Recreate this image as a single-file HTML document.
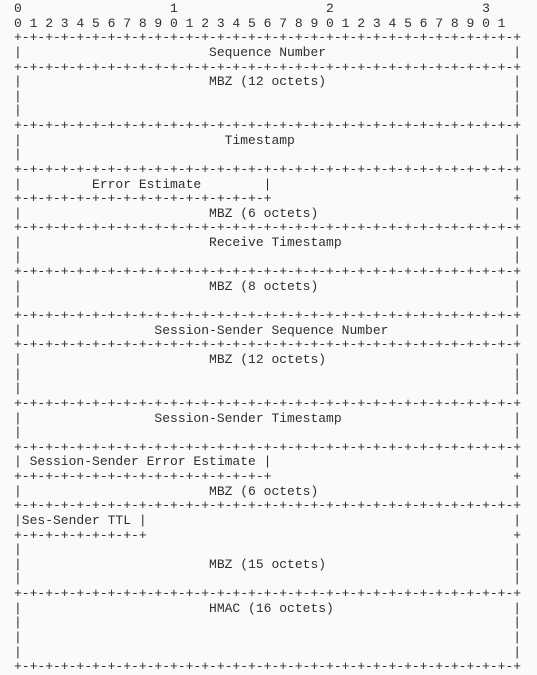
<!DOCTYPE html>
<html><head><meta charset="utf-8"><style>
html,body{margin:0;padding:0;background:#fafafa;width:537px;height:672px;overflow:hidden}
pre{margin:0;position:absolute;left:14px;top:2px;font-family:"Liberation Mono",monospace;font-size:13.0px;line-height:14.63px;color:#2e2e2e}
</style></head><body><pre>0                   1                   2                   3
0 1 2 3 4 5 6 7 8 9 0 1 2 3 4 5 6 7 8 9 0 1 2 3 4 5 6 7 8 9 0 1
+-+-+-+-+-+-+-+-+-+-+-+-+-+-+-+-+-+-+-+-+-+-+-+-+-+-+-+-+-+-+-+-+
|                        Sequence Number                        |
+-+-+-+-+-+-+-+-+-+-+-+-+-+-+-+-+-+-+-+-+-+-+-+-+-+-+-+-+-+-+-+-+
|                        MBZ (12 octets)                        |
|                                                               |
|                                                               |
+-+-+-+-+-+-+-+-+-+-+-+-+-+-+-+-+-+-+-+-+-+-+-+-+-+-+-+-+-+-+-+-+
|                          Timestamp                            |
|                                                               |
+-+-+-+-+-+-+-+-+-+-+-+-+-+-+-+-+-+-+-+-+-+-+-+-+-+-+-+-+-+-+-+-+
|         Error Estimate        |                               |
+-+-+-+-+-+-+-+-+-+-+-+-+-+-+-+-+                               +
|                        MBZ (6 octets)                         |
+-+-+-+-+-+-+-+-+-+-+-+-+-+-+-+-+-+-+-+-+-+-+-+-+-+-+-+-+-+-+-+-+
|                        Receive Timestamp                      |
|                                                               |
+-+-+-+-+-+-+-+-+-+-+-+-+-+-+-+-+-+-+-+-+-+-+-+-+-+-+-+-+-+-+-+-+
|                        MBZ (8 octets)                         |
|                                                               |
+-+-+-+-+-+-+-+-+-+-+-+-+-+-+-+-+-+-+-+-+-+-+-+-+-+-+-+-+-+-+-+-+
|                 Session-Sender Sequence Number                |
+-+-+-+-+-+-+-+-+-+-+-+-+-+-+-+-+-+-+-+-+-+-+-+-+-+-+-+-+-+-+-+-+
|                        MBZ (12 octets)                        |
|                                                               |
|                                                               |
+-+-+-+-+-+-+-+-+-+-+-+-+-+-+-+-+-+-+-+-+-+-+-+-+-+-+-+-+-+-+-+-+
|                 Session-Sender Timestamp                      |
|                                                               |
+-+-+-+-+-+-+-+-+-+-+-+-+-+-+-+-+-+-+-+-+-+-+-+-+-+-+-+-+-+-+-+-+
| Session-Sender Error Estimate |                               |
+-+-+-+-+-+-+-+-+-+-+-+-+-+-+-+-+                               +
|                        MBZ (6 octets)                         |
+-+-+-+-+-+-+-+-+-+-+-+-+-+-+-+-+-+-+-+-+-+-+-+-+-+-+-+-+-+-+-+-+
|Ses-Sender TTL |                                               |
+-+-+-+-+-+-+-+-+                                               +
|                                                               |
|                        MBZ (15 octets)                        |
|                                                               |
+-+-+-+-+-+-+-+-+-+-+-+-+-+-+-+-+-+-+-+-+-+-+-+-+-+-+-+-+-+-+-+-+
|                        HMAC (16 octets)                       |
|                                                               |
|                                                               |
|                                                               |
+-+-+-+-+-+-+-+-+-+-+-+-+-+-+-+-+-+-+-+-+-+-+-+-+-+-+-+-+-+-+-+-+</pre></body></html>
